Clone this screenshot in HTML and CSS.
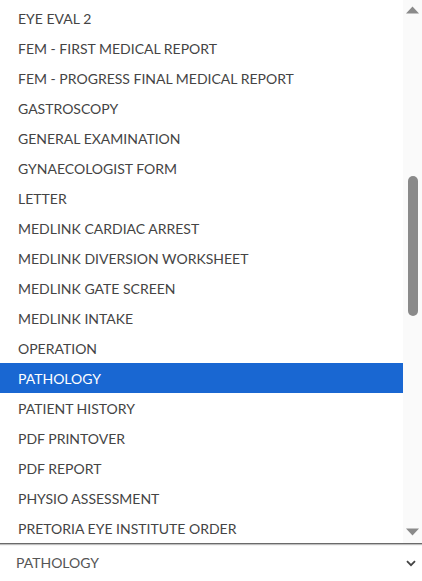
FILE: index.html
```html
<!DOCTYPE html>
<html>
<head>
<meta charset="utf-8">
<link rel="stylesheet" href="styles.css">
</head>
<body>
<div class="dropdown">
  <div class="listbox">
    <ul class="options">
      <li class="opt">EYE EVAL 2</li>
      <li class="opt">FEM - FIRST MEDICAL REPORT</li>
      <li class="opt">FEM - PROGRESS FINAL MEDICAL REPORT</li>
      <li class="opt">GASTROSCOPY</li>
      <li class="opt">GENERAL EXAMINATION</li>
      <li class="opt">GYNAECOLOGIST FORM</li>
      <li class="opt">LETTER</li>
      <li class="opt">MEDLINK CARDIAC ARREST</li>
      <li class="opt">MEDLINK DIVERSION WORKSHEET</li>
      <li class="opt">MEDLINK GATE SCREEN</li>
      <li class="opt">MEDLINK INTAKE</li>
      <li class="opt">OPERATION</li>
      <li class="opt selected">PATHOLOGY</li>
      <li class="opt">PATIENT HISTORY</li>
      <li class="opt">PDF PRINTOVER</li>
      <li class="opt">PDF REPORT</li>
      <li class="opt">PHYSIO ASSESSMENT</li>
      <li class="opt">PRETORIA EYE INSTITUTE ORDER</li>
    </ul>
    <div class="scrollbar">
      <div class="arrow up"><svg width="13" height="8" viewBox="0 0 13 8"><polygon points="6.5,0.5 13,7.5 0,7.5" fill="#8a8a8a"/></svg></div>
      <div class="track"><div class="thumb"></div></div>
      <div class="arrow down"><svg width="13" height="8" viewBox="0 0 13 8"><polygon points="0,0.5 13,0.5 6.5,7.5" fill="#8a8a8a"/></svg></div>
    </div>
  </div>
  <div class="select">
    <span class="value">PATHOLOGY</span>
    <svg class="chev" width="10" height="7" viewBox="0 0 10 7"><polyline points="1,1.2 5,5.2 9,1.2" fill="none" stroke="#444" stroke-width="1.8"/></svg>
  </div>
</div>
</body>
</html>
```
FILE: styles.css
```css
html, body {
  margin: 0;
  padding: 0;
  background: #fff;
}
.dropdown {
  width: 422px;
  height: 581px;
  display: flex;
  flex-direction: column;
  font-family: "Lato", "Liberation Sans", sans-serif;
  font-size: 14px;
}
.listbox {
  display: flex;
  height: 543px;
  overflow: hidden;
  border-bottom: 1px solid #6a6a6a;
  box-shadow: 0 1px 1px rgba(0,0,0,0.25);
}
.options {
  list-style: none;
  margin: 0;
  padding: 3px 0 0 0;
  flex: 1;
}
.opt {
  box-sizing: border-box;
  height: 30px;
  line-height: 29px;
  padding-top: 1px;
  padding-left: 18px;
  color: #444;
  white-space: nowrap;
}
.opt.selected {
  background: #1967d2;
  color: #fff;
}
.scrollbar {
  width: 19px;
  background: #fafafa;
  display: flex;
  flex-direction: column;
}
.arrow {
  display: flex;
  justify-content: center;
}
.arrow.up { align-items: flex-start; padding-top: 6px; height: 15px; }
.arrow.down { align-items: flex-end; padding-bottom: 7px; height: 14px; }
.track {
  flex: 1;
  display: flex;
  justify-content: center;
}
.thumb {
  width: 10px;
  height: 140px;
  margin-top: 155px;
  background: #8a8a8a;
  border-radius: 5px;
}
.select {
  flex: 1;
  display: flex;
  align-items: center;
  justify-content: space-between;
  padding: 0 6px 0 16px;
  color: #555;
}
.chev {
  margin-top: 1px;
}
```
